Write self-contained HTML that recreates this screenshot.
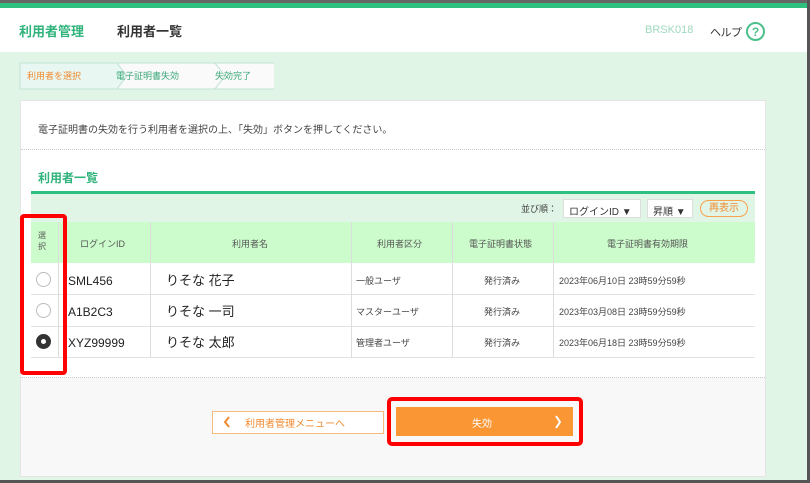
<!DOCTYPE html>
<html><head><meta charset="utf-8"><style>
*{margin:0;padding:0;box-sizing:border-box}
body{width:810px;height:483px;overflow:hidden;background:#e0f5e6;font-family:"Liberation Sans","Noto Sans CJK JP",sans-serif;position:relative;color:#333}
.a{position:absolute}
</style></head><body>
<div class="a" style="left:0;top:0;width:810px;height:3px;background:#666"></div>
<div class="a" style="left:0;top:3px;width:810px;height:5px;background:#2fbf7f"></div>
<div class="a" style="left:0;top:8px;width:808px;height:44px;background:#fff"></div>
<div class="a" style="left:807px;top:0;width:3px;height:483px;background:#555"></div>
<div class="a" style="left:0;top:480px;width:810px;height:3px;background:#555"></div>
<div class="a" style="left:19px;top:21px;font-size:13px;font-weight:bold;color:#2fb37a">利用者管理</div>
<div class="a" style="left:117px;top:21px;font-size:13px;font-weight:bold;color:#333">利用者一覧</div>
<div class="a" style="left:645px;top:24px;font-size:11px;color:#9fd9bd">BRSK018</div>
<div class="a" style="left:710px;top:24px;font-size:11px;color:#333;letter-spacing:-0.5px">ヘルプ</div>
<svg class="a" style="left:745px;top:21px" width="21" height="21"><circle cx="10.5" cy="10.5" r="8.5" fill="none" stroke="#4cc08a" stroke-width="2"/><text x="10.5" y="15" text-anchor="middle" font-size="12" font-weight="bold" fill="#4cc08a" font-family="Liberation Sans">?</text></svg>
<!-- breadcrumb -->
<svg class="a" style="left:19px;top:62px" width="255" height="28">
<path d="M1 1H98L108 14L98 27H1Z" fill="#e8f7f2" stroke="#bfe3d3"/>
<path d="M98 1H196L206 14L196 27H98L108 14Z" fill="#fafafa" stroke="#bfe3d3"/>
<path d="M196 1H262L272 14L262 27H196L206 14Z" fill="#fafafa" stroke="#bfe3d3"/>
</svg>
<div class="a" style="left:27px;top:69px;font-size:9px;color:#f08a30">利用者を選択</div>
<div class="a" style="left:116px;top:69px;font-size:9px;color:#3aa77a">電子証明書失効</div>
<div class="a" style="left:215px;top:69px;font-size:9px;color:#3aa77a">失効完了</div>
<!-- card -->
<div class="a" style="left:20px;top:100px;width:746px;height:377px;background:#fff;border:1px solid #e4e4e4"></div>
<div class="a" style="left:21px;top:377px;width:744px;height:99px;background:#f8f8f8;border-top:1px dotted #ccc"></div>
<div class="a" style="left:38px;top:121px;font-size:10px;color:#444">電子証明書の失効を行う利用者を選択の上、「失効」ボタンを押してください。</div>
<div class="a" style="left:21px;top:149px;width:744px;border-top:1px dotted #ccc"></div>
<div class="a" style="left:38px;top:169px;font-size:12px;font-weight:bold;color:#2fb37a">利用者一覧</div>
<div class="a" style="left:31px;top:191px;width:724px;height:3px;background:#2fbf7f"></div>
<div class="a" style="left:31px;top:194px;width:724px;height:28px;background:#e0f5e6"></div>
<div class="a" style="left:521px;top:202px;font-size:9px;color:#444">並び順：</div>
<div class="a" style="left:563px;top:199px;width:78px;height:19px;background:#fff;border:1px solid #ddd;font-size:10px;padding:3px 5px">ログインID ▼</div>
<div class="a" style="left:647px;top:199px;width:46px;height:19px;background:#fff;border:1px solid #ddd;font-size:10px;padding:3px 5px">昇順 ▼</div>
<div class="a" style="left:700px;top:200px;width:48px;height:17px;border:1px solid #f7a24c;border-radius:9px;font-size:10px;color:#f08a30;text-align:center;line-height:15px">再表示</div>
<!-- table -->
<div class="a" style="left:31px;top:222px;width:724px;height:41px;background:#ccfccc"></div>
<div class="a" style="left:31px;top:263px;width:724px;height:94px;background:#fff"></div>
<div class="a" style="left:31px;top:294px;width:724px;border-top:1px solid #e2e2e2"></div>
<div class="a" style="left:31px;top:326px;width:724px;border-top:1px solid #e2e2e2"></div>
<div class="a" style="left:31px;top:357px;width:724px;border-top:1px solid #e2e2e2"></div>
<div class="a" style="left:58px;top:222px;height:135px;border-left:1px solid #ddd"></div>
<div class="a" style="left:150px;top:222px;height:135px;border-left:1px solid #ddd"></div>
<div class="a" style="left:351px;top:222px;height:135px;border-left:1px solid #ddd"></div>
<div class="a" style="left:452px;top:222px;height:135px;border-left:1px solid #ddd"></div>
<div class="a" style="left:553px;top:222px;height:135px;border-left:1px solid #ddd"></div>
<div class="a" style="left:38px;top:230px;font-size:8px;line-height:11px;color:#555;text-align:center">選<br>択</div>
<div class="a" style="left:80px;top:237px;font-size:9px;color:#555">ログインID</div>
<div class="a" style="left:232px;top:237px;font-size:9px;color:#555">利用者名</div>
<div class="a" style="left:377px;top:237px;font-size:9px;color:#555">利用者区分</div>
<div class="a" style="left:469px;top:237px;font-size:9px;color:#555">電子証明書状態</div>
<div class="a" style="left:607px;top:237px;font-size:9px;color:#555">電子証明書有効期限</div>
<div class="a" style="left:36px;top:272px;width:15px;height:15px;border:1px solid #bbb;border-radius:50%"></div>
<div class="a" style="left:36px;top:303px;width:15px;height:15px;border:1px solid #bbb;border-radius:50%"></div>
<div class="a" style="left:36px;top:334px;width:15px;height:15px;background:#333;border-radius:50%"></div>
<div class="a" style="left:41px;top:339px;width:5px;height:5px;background:#fff;border-radius:50%"></div>
<div class="a" style="left:68px;top:274px;font-size:12px;color:#222">SML456</div>
<div class="a" style="left:68px;top:305px;font-size:12px;color:#222">A1B2C3</div>
<div class="a" style="left:68px;top:336px;font-size:12px;color:#222">XYZ99999</div>
<div class="a" style="left:166px;top:270px;font-size:13px;color:#222">りそな 花子</div>
<div class="a" style="left:166px;top:301px;font-size:13px;color:#222">りそな 一司</div>
<div class="a" style="left:166px;top:332px;font-size:13px;color:#222">りそな 太郎</div>
<div class="a" style="left:356px;top:274px;font-size:9px;color:#444">一般ユーザ</div>
<div class="a" style="left:356px;top:305px;font-size:9px;color:#444">マスターユーザ</div>
<div class="a" style="left:356px;top:336px;font-size:9px;color:#444">管理者ユーザ</div>
<div class="a" style="left:484px;top:274px;font-size:9px;color:#444">発行済み</div>
<div class="a" style="left:484px;top:305px;font-size:9px;color:#444">発行済み</div>
<div class="a" style="left:484px;top:336px;font-size:9px;color:#444">発行済み</div>
<div class="a" style="left:559px;top:274px;font-size:9px;color:#444">2023年06月10日 23時59分59秒</div>
<div class="a" style="left:559px;top:305px;font-size:9px;color:#444">2023年03月08日 23時59分59秒</div>
<div class="a" style="left:559px;top:336px;font-size:9px;color:#444">2023年06月18日 23時59分59秒</div>
<!-- buttons -->
<div class="a" style="left:212px;top:411px;width:172px;height:23px;background:#fff;border:1px solid #f7b87a"></div>
<svg class="a" style="left:222px;top:415px" width="10" height="14"><path d="M7 2L3 7L7 12" fill="none" stroke="#f08a30" stroke-width="2"/></svg>
<div class="a" style="left:245px;top:415px;font-size:10px;color:#f08a30">利用者管理メニューへ</div>
<div class="a" style="left:396px;top:407px;width:177px;height:29px;background:#fb9634"></div>
<div class="a" style="left:472px;top:415px;font-size:10px;color:#fff">失効</div>
<svg class="a" style="left:553px;top:414px" width="10" height="16"><path d="M3 2L7 8L3 14" fill="none" stroke="#fff" stroke-width="2"/></svg>
<!-- red highlight boxes -->
<div class="a" style="left:20px;top:214px;width:47px;height:161px;border:4px solid #f00;border-radius:4px"></div>
<div class="a" style="left:387px;top:397px;width:196px;height:49px;border:4px solid #f00;border-radius:5px"></div>
</body></html>
